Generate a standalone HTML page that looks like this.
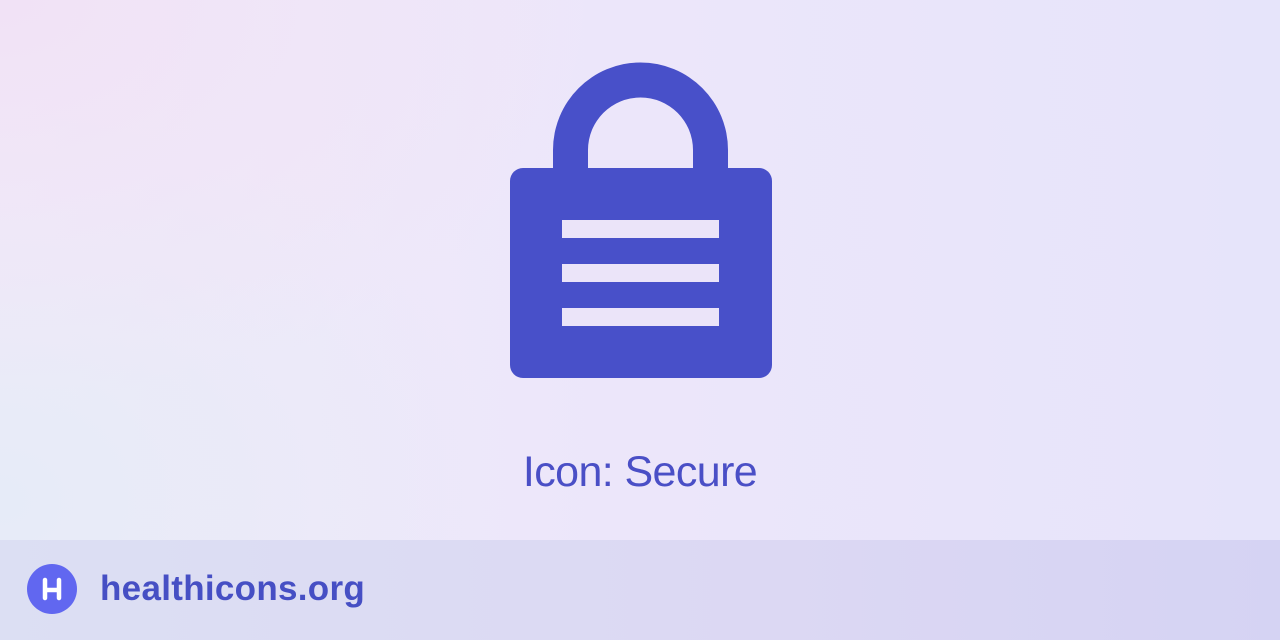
<!DOCTYPE html>
<html><head><style>
html,body{margin:0;padding:0;width:1280px;height:640px;overflow:hidden}
body{position:relative;font-family:"Liberation Sans",sans-serif;
background:radial-gradient(ellipse 600px 400px at 0px 0px,#f1e2f6 0%,rgba(241,226,246,0) 100%),radial-gradient(ellipse 500px 400px at 0px 500px,#e6ebf8 0%,rgba(230,235,248,0) 100%),linear-gradient(90deg,#f1ecf9 0%,#ece6fa 50%,#e6e4fa 100%);}
.t{position:absolute;left:0;width:1280px;top:448px;text-align:center;font-size:43px;color:#4a4fc6;letter-spacing:-0.6px}
.f{position:absolute;left:0;top:540px;width:1280px;height:100px;background:linear-gradient(90deg,#dcdff3,#dcd8f3 60%,#d5d3f3)}
.c{position:absolute;left:27px;top:564px;width:50px;height:50px;border-radius:50%;background:#6167f0}
.h{position:absolute;left:100px;top:569px;font-size:35px;font-weight:bold;color:#464fc4;letter-spacing:0.3px}
</style></head><body>
<svg style="position:absolute;left:0;top:0" width="1280" height="540">
<path d="M553 168 V150 A87.5 87.5 0 0 1 728 150 V168 H693 V150 A52.5 52.5 0 0 0 588 150 V168 Z" fill="#4850c9"/>
<rect x="510" y="168" width="262" height="210" rx="13" fill="#4850c9"/>
<rect x="562" y="220" width="157" height="18" fill="#ebe4f9"/>
<rect x="562" y="264" width="157" height="18" fill="#ebe4f9"/>
<rect x="562" y="308" width="157" height="18" fill="#ebe4f9"/>
</svg>
<div class="t">Icon: Secure</div>
<div class="f"></div>
<div class="c"><svg width="50" height="50"><path d="M18 16V34M32 16V34M18 26H32" stroke="#fff" stroke-width="4.5" stroke-linecap="round" fill="none"/></svg></div>
<div class="h">healthicons.org</div>
</body></html>
